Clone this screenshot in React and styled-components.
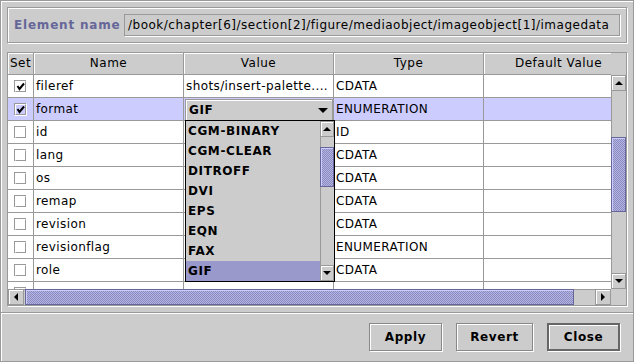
import React from "react";
import styled, { createGlobalStyle } from "styled-components";

const FONT = `"DejaVu Sans", "Liberation Sans", sans-serif`;

const GlobalStyle = createGlobalStyle`
  html, body { margin: 0; padding: 0; background: #cccccc; }
  * { box-sizing: border-box; }
`;

const Window = styled.div`
  width: 634px;
  height: 362px;
  background: #cccccc;
  border: 1px solid #999999;
  box-shadow: inset 1px 1px 0 #ffffff;
  display: flex;
  flex-direction: column;
  font-family: ${FONT};
  font-size: 12px;
  color: #000;
  overflow: hidden;
`;

const Content = styled.div`
  flex: 1;
  padding: 6px;
  display: flex;
  flex-direction: column;
  gap: 9px;
`;

const NamePanel = styled.div`
  height: 36px;
  flex-shrink: 0;
  display: flex;
  align-items: center;
  border: 1px solid #999999;
  box-shadow: inset 1px 1px 0 #ffffff, 1px 1px 0 #ffffff;
  padding: 0 6px;
`;

const NameLabel = styled.div`
  width: 110px;
  flex-shrink: 0;
  color: #666699;
  font-weight: bold;
  letter-spacing: 0.8px;
`;

const PathField = styled.div`
  flex: 1;
  height: 22px;
  line-height: 20px;
  padding-left: 3px;
  border: 1px solid #999999;
  box-shadow: 1px 1px 0 #ffffff;
  letter-spacing: 0.5px;
  white-space: nowrap;
  overflow: hidden;
`;

const ScrollPane = styled.div`
  height: 254px;
  flex-shrink: 0;
  border: 1px solid #999999;
  box-shadow: 1px 1px 0 #ffffff;
  display: grid;
  grid-template-columns: 603px 15px;
  grid-template-rows: 22px 214px 16px;
  background: #cccccc;
`;

const Header = styled.div`
  display: flex;
  overflow: hidden;
`;

const HeaderCell = styled.div`
  flex: 0 0 ${(p) => p.$w}px;
  height: 22px;
  line-height: 21px;
  text-align: center;
  border-right: 1px solid #999999;
  border-bottom: 1px solid #999999;
  box-shadow: inset 1px 1px 0 #ffffff;
  letter-spacing: 0.5px;
  white-space: nowrap;
  overflow: hidden;
`;

const Filler = styled.div`
  background: #cccccc;
`;

const Body = styled.div`
  overflow: hidden;
  background: #ffffff;
`;

const Row = styled.div`
  display: flex;
  height: 23px;
  background: ${(p) => (p.$selected ? "#ccccff" : "#ffffff")};
`;

const Cell = styled.div`
  flex: 0 0 ${(p) => p.$w}px;
  display: flex;
  align-items: center;
  justify-content: ${(p) => (p.$center ? "center" : "flex-start")};
  padding-left: ${(p) => (p.$center ? 0 : 2)}px;
  border-right: 1px solid #999999;
  border-bottom: 1px solid #999999;
  letter-spacing: 0.4px;
  white-space: nowrap;
  overflow: ${(p) => (p.$open ? "visible" : "hidden")};
  position: ${(p) => (p.$open ? "relative" : "static")};
`;

const Combo = styled.div`
  position: absolute;
  left: 1px;
  top: 1px;
  width: 148px;
  height: 22px;
  display: flex;
  align-items: center;
  justify-content: space-between;
  padding: 0 4px 0 3px;
  background: #cccccc;
  border: 1px solid #999999;
  box-shadow: inset 1px 1px 0 #ffffff;
  font-weight: bold;
  letter-spacing: 0.6px;
`;

const Popup = styled.div`
  position: absolute;
  left: -1px;
  top: 100%;
  width: 150px;
  height: 162px;
  z-index: 5;
  display: flex;
  border: 1px solid #000000;
  background: #cccccc;
`;

const List = styled.div`
  flex: 1;
  display: flex;
  flex-direction: column;
`;

const Item = styled.div`
  height: 20px;
  line-height: 20px;
  padding-left: 2px;
  font-weight: bold;
  letter-spacing: 0.6px;
  background: ${(p) => (p.$selected ? "#9999cc" : "#cccccc")};
`;

const Bar = styled.div`
  display: flex;
  flex-direction: ${(p) => (p.$vertical ? "column" : "row")};
  flex: ${(p) => (p.$fixed ? `0 0 ${p.$fixed}px` : "none")};
  background: #cccccc;
`;

const ArrowButton = styled.div`
  flex: 0 0 16px;
  display: flex;
  align-items: center;
  justify-content: center;
  background: #cccccc;
  border: 1px solid #999999;
  box-shadow: inset 1px 1px 0 #ffffff;
`;

const Triangle = styled.div`
  width: 0;
  height: 0;
  border-style: solid;
  border-color: transparent;
  ${(p) =>
    p.$dir === "up"
      ? "border-width: 0 4px 4px 4px; border-bottom-color: #000;"
      : p.$dir === "down"
      ? "border-width: 4px 4px 0 4px; border-top-color: #000;"
      : p.$dir === "left"
      ? "border-width: 4px 4px 4px 0; border-right-color: #000;"
      : "border-width: 4px 0 4px 4px; border-left-color: #000;"}
`;

const Track = styled.div`
  flex: 1;
  display: flex;
  flex-direction: ${(p) => (p.$vertical ? "column" : "row")};
  background: #cccccc;
  box-shadow: ${(p) => (p.$vertical ? "inset 1px 0 0 #999999" : "inset 0 1px 0 #999999")};
`;

const Thumb = styled.div`
  flex: 0 0 ${(p) => p.$size}px;
  ${(p) => (p.$vertical ? `margin-top: ${p.$offset}px;` : `margin-left: ${p.$offset}px;`)}
  border: 1px solid #666699;
  box-shadow: inset 1px 1px 0 #ccccff;
  background: repeating-conic-gradient(#b4b4e4 0 25%, #8c8cc0 0 50%) 0 0 / 2px 2px;
`;

const ComboArrow = styled.div`
  width: 0;
  height: 0;
  border-style: solid;
  border-width: 5px 5px 0 5px;
  border-color: #000 transparent transparent transparent;
`;

const ButtonBar = styled.div`
  height: 49px;
  flex-shrink: 0;
  border-top: 1px solid #999999;
  box-shadow: inset 0 1px 0 #ffffff;
  display: flex;
  justify-content: flex-end;
  align-items: flex-start;
  gap: 14px;
  padding: 10px 13px 0 0;
`;

const Button = styled.div`
  width: ${(p) => p.$w}px;
  height: 28px;
  display: flex;
  align-items: center;
  justify-content: center;
  background: #cccccc;
  border: ${(p) => (p.$default ? "2px solid #666666" : "1px solid #888888")};
  box-shadow: inset 1px 1px 0 #ffffff, 1px 1px 0 #ffffff;
  font-weight: bold;
  letter-spacing: 0.6px;
`;

const CheckBox = ({ checked }) => (
  <svg width="13" height="13" viewBox="0 0 13 13">
    <rect x="0.5" y="0.5" width="11" height="11" fill="none" stroke="#999999" />
    <path d="M1.5 11.5 V1.5 H11.5" fill="none" stroke="#ffffff" />
    <path d="M12.5 0.5 V12.5 H0.5" fill="none" stroke="#ffffff" />
    {checked && (
      <path d="M3.5 6 L5.5 9 L10 3.5" fill="none" stroke="#000000" strokeWidth="2" />
    )}
  </svg>
);

const ScrollBar = ({ vertical, offset, size }) => (
  <Bar $vertical={vertical}>
    <ArrowButton>
      <Triangle $dir={vertical ? "up" : "left"} />
    </ArrowButton>
    <Track $vertical={vertical}>
      <Thumb $vertical={vertical} $offset={offset} $size={size} />
    </Track>
    <ArrowButton>
      <Triangle $dir={vertical ? "down" : "right"} />
    </ArrowButton>
  </Bar>
);

const columns = [
  { title: "Set", w: 26 },
  { title: "Name", w: 150 },
  { title: "Value", w: 150 },
  { title: "Type", w: 150 },
  { title: "Default Value", w: 150 },
];

// the last row is only peeking out under the horizontal scroll bar
const attributes = [
  { name: "fileref", value: "shots/insert-palette....", type: "CDATA", set: true },
  { name: "format", value: "GIF", type: "ENUMERATION", set: true, open: true },
  { name: "id", value: "", type: "ID" },
  { name: "lang", value: "", type: "CDATA" },
  { name: "os", value: "", type: "CDATA" },
  { name: "remap", value: "", type: "CDATA" },
  { name: "revision", value: "", type: "CDATA" },
  { name: "revisionflag", value: "", type: "ENUMERATION" },
  { name: "role", value: "", type: "CDATA" },
  { name: "", value: "", type: "" },
];

const formats = ["CGM-BINARY", "CGM-CLEAR", "DITROFF", "DVI", "EPS", "EQN", "FAX", "GIF"];

const App = () => {
  return (
    <Window>
      <GlobalStyle />
      <Content>
        <NamePanel>
          <NameLabel>Element name</NameLabel>
          <PathField>/book/chapter[6]/section[2]/figure/mediaobject/imageobject[1]/imagedata</PathField>
        </NamePanel>
        <ScrollPane>
          <Header>
            {columns.map((c) => (
              <HeaderCell key={c.title} $w={c.w}>{c.title}</HeaderCell>
            ))}
          </Header>
          <Filler />
          <Body>
            {attributes.map((a, i) => (
              <Row key={i} $selected={a.open}>
                <Cell $w={26} $center>
                  <CheckBox checked={a.set} />
                </Cell>
                <Cell $w={150}>{a.name}</Cell>
                <Cell $w={150} $open={a.open}>
                  {a.open ? (
                    <Combo>
                      <span>{a.value}</span>
                      <ComboArrow />
                      <Popup>
                        <List>
                          {formats.map((f) => (
                            <Item key={f} $selected={f === a.value}>{f}</Item>
                          ))}
                        </List>
                        <Bar $vertical $fixed={14}>
                          <ArrowButton>
                            <Triangle $dir="up" />
                          </ArrowButton>
                          <Track $vertical>
                            <Thumb $vertical $offset={10} $size={40} />
                          </Track>
                          <ArrowButton>
                            <Triangle $dir="down" />
                          </ArrowButton>
                        </Bar>
                      </Popup>
                    </Combo>
                  ) : (
                    a.value
                  )}
                </Cell>
                <Cell $w={150}>{a.type}</Cell>
                <Cell $w={150}></Cell>
              </Row>
            ))}
          </Body>
          <ScrollBar vertical offset={46} size={75} />
          <ScrollBar offset={1} size={549} />
          <Filler />
        </ScrollPane>
      </Content>
      <ButtonBar>
        <Button $w={73}>Apply</Button>
        <Button $w={77}>Revert</Button>
        <Button $w={73} $default>Close</Button>
      </ButtonBar>
    </Window>
  );
};

export default App;
